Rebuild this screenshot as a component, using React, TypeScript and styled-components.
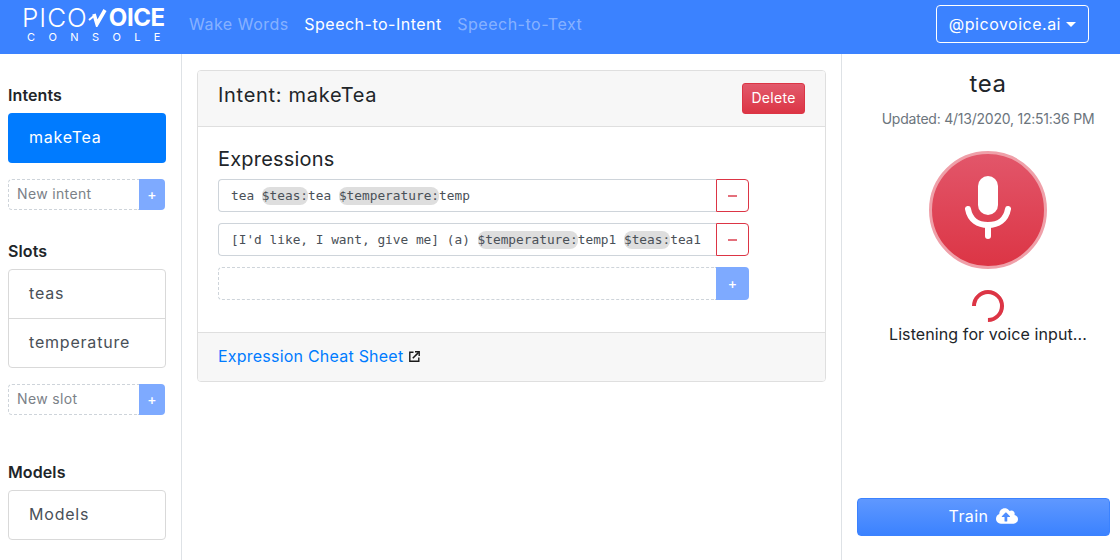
import React from "react";
import styled, { createGlobalStyle } from "styled-components";
import { FaCloudUploadAlt } from "react-icons/fa";

const Global = createGlobalStyle`
  html, body { margin: 0; padding: 0; height: 560px; overflow: hidden; background: #fff; }
  * { box-sizing: border-box; }
  body { font-family: Inter, "Noto Sans", sans-serif; color: #212529; }
`;

const Page = styled.div`display: flex; flex-direction: column; width: 1120px; height: 560px; overflow: hidden;`;
const Navbar = styled.header`display: flex; align-items: center; height: 54px; flex: none; background: #3b82ff; padding: 0 31px 6px 22px;`;
const Logo = styled.div`display: flex; flex-direction: column; width: 144px; color: #fff; margin-right: 23px;`;
const LogoTop = styled.div`display: flex; align-items: center; height: 22px; font-size: 26px; line-height: 22px; margin-top: 2px;`;
const LogoThin = styled.span`font-weight: 300; letter-spacing: 1px;`;
const LogoBold = styled.span`font-size: 24px; font-weight: 700; letter-spacing: -0.4px;`;
const LogoSub = styled.div`font-size: 11px; line-height: 12px; letter-spacing: 13.4px; margin-top: 2px; padding-left: 5px; white-space: nowrap; font-weight: 400;`;
const NavLink = styled.a<{ $active?: boolean }>`
  font-size: 16px; letter-spacing: 0.5px; margin-right: 15.5px; white-space: nowrap;
  color: ${p => (p.$active ? "#fff" : "rgba(255,255,255,.4)")};
`;
const Spacer = styled.div`flex: 1;`;
const Account = styled.button`
  display: flex; align-items: center; height: 38px; padding: 0 12px; font: inherit; font-size: 16px; letter-spacing: 0.5px;
  color: #fff; background: transparent; border: 1px solid #fff; border-radius: 4px;
  &::after { content: ""; margin-left: 5px; border-top: 5px solid #fff; border-left: 5px solid transparent; border-right: 5px solid transparent; }
`;

const Body = styled.div`display: flex; flex: 1; min-height: 0;`;
const Sidebar = styled.aside`width: 182px; flex: none; border-right: 1px solid #dee2e6; padding: 32px 15px 0 8px;`;
const SectionTitle = styled.h6`margin: 0 0 8px; font-size: 16px; line-height: 19px; font-weight: 600; color: #212529; letter-spacing: 0.1px;`;
const ActiveItem = styled.div`
  height: 50px; display: flex; align-items: center; padding: 0 21px 2px; background: #007bff; color: #fff; border-radius: 4px;
  font-size: 16px; letter-spacing: 0.8px;
`;
const ItemList = styled.div`border: 1px solid #d9d9d9; border-radius: 4px; overflow: hidden;`;
const Item = styled.div`
  height: 48px; display: flex; align-items: center; padding: 0 20px 2px; font-size: 16px; letter-spacing: 0.8px; color: #495057;
  & + & { border-top: 1px solid #d9d9d9; height: 49px; }
`;
const NewRow = styled.div<{ $mb: number }>`display: flex; height: 31px; width: 157px; margin-top: 16px; margin-bottom: ${p => p.$mb}px;`;
const NewField = styled.div`
  flex: 1; display: flex; align-items: center; padding: 0 8px 2px; font-size: 14px; letter-spacing: 0.35px; color: #7b8188;
  border: 1px dashed #ced4da; border-right: 0; border-radius: 4px 0 0 4px;
`;
const PlusBtn = styled.div<{ $w: number }>`
  width: ${p => p.$w}px; flex: none; display: flex; align-items: center; justify-content: center;
  background: #7eaaff; color: #fff; border-radius: 0 4px 4px 0; font-size: 14px; font-weight: 500;
`;

const Main = styled.main`flex: 1; min-width: 0; padding: 16px 15px 0; border-right: 1px solid #dee2e6;`;
const Card = styled.section`border: 1px solid #dfdfdf; border-radius: 4px; overflow: hidden;`;
const CardHeader = styled.div`
  height: 56px; display: flex; align-items: flex-start; justify-content: space-between; padding: 12px 20px;
  background: #f7f7f7; border-bottom: 1px solid #dfdfdf;
`;
const CardTitle = styled.h5`margin: 0; font-size: 20px; line-height: 24px; font-weight: 400; letter-spacing: 0.7px;`;
const Danger = styled.button`
  height: 31px; width: 63px; padding: 0 0 2px; font: inherit; font-size: 14px; letter-spacing: 0.3px; color: #fff;
  border: 1px solid #dc3545; border-radius: 3px; background: linear-gradient(180deg, #e25a6c, #dc3545);
`;
const CardBody = styled.div`padding: 20px 20px 32px; display: flex; flex-direction: column; gap: 11px;`;
const ExprTitle = styled.h5`margin: 0 0 -3px; font-size: 20px; line-height: 24px; font-weight: 400; letter-spacing: 0.2px;`;
const ExprRow = styled.div`display: flex; height: 33px; width: 531px;`;
const ExprField = styled.div`
  flex: 1; display: flex; align-items: center; padding: 0 12px; white-space: pre;
  font-family: "DejaVu Sans Mono", monospace; font-size: 12.8px; color: #495057;
  border: 1px solid #ced4da; border-right: 0; border-radius: 4px 0 0 4px;
`;
const Empty = styled.div`flex: 1; border: 1px dashed #ced4da; border-right: 0; border-radius: 4px 0 0 4px;`;
const Slot = styled.span`background: #dedede; border-radius: 8px; line-height: 18px;`;
const MinusBtn = styled.div`
  width: 33px; flex: none; display: flex; align-items: center; justify-content: center;
  border: 1px solid #dc3545; border-radius: 0 4px 4px 0;
  &::before { content: ""; width: 9px; height: 2px; background: #e4707c; }
`;
const CardFooter = styled.div`
  height: 49px; display: flex; align-items: center; padding: 0 20px 2px; background: #f7f7f7; border-top: 1px solid #dfdfdf;
`;
const CheatLink = styled.a`color: #007bff; font-size: 16px; letter-spacing: 0.22px; display: flex; align-items: center; gap: 6px;`;

const Right = styled.aside`width: 278px; flex: none; padding: 15px 0 0 14px; display: flex; flex-direction: column; align-items: center;`;
const WordTitle = styled.h4`margin: 0; font-size: 24px; line-height: 29px; font-weight: 400; letter-spacing: 0.5px;`;
const Updated = styled.div`margin-top: 12px; font-size: 14px; line-height: 17px; letter-spacing: -0.23px; color: #6c757d; white-space: nowrap;`;
const MicButton = styled.div`
  width: 118px; height: 118px; margin-top: 24px; border-radius: 50%; border: 3px solid #efa0a9; padding-bottom: 6px;
  background: linear-gradient(180deg, #e2566a, #dc3545); display: flex; align-items: center; justify-content: center;
`;
const Spinner = styled.div`
  width: 32px; height: 32px; margin-top: 21px; border-radius: 50%; border: 4px solid #dc3545; border-right-color: transparent; transform: rotate(135deg);
`;
const Listening = styled.div`font-size: 16px; line-height: 24px; letter-spacing: 0.1px; white-space: nowrap;`;
const Train = styled.button`
  margin-top: auto; margin-bottom: 24px; align-self: stretch; margin-left: 1px; margin-right: 10px; height: 38px; padding: 0 0 2px; font: inherit; font-size: 16px; letter-spacing: 0.42px;
  color: #fff; border: 1px solid #3b82ff; border-radius: 4px; background: linear-gradient(180deg, #5f98ff, #3b82ff);
  display: flex; align-items: center; justify-content: center; gap: 8px;
`;
const VMarkSvg = styled.svg`flex: none; margin: 0 1px 0 0;`;

const VMark = () => (
  <VMarkSvg width="20" height="18" viewBox="0 0 20 18" fill="none" aria-hidden="true">
    <path d="M1 11 L6.5 6.5" stroke="#fff" strokeWidth="2" />
    <path d="M6 5 L9 15 L17 1" stroke="#fff" strokeWidth="3.6" strokeLinejoin="miter" />
  </VMarkSvg>
);

const ExternalIcon = () => (
  <svg width="11" height="11" viewBox="0 0 11 11" fill="none" stroke="#1a1a1a" aria-hidden="true">
    <path d="M4.5 1.2 H0.8 V10.2 H9.8 V6.5" strokeWidth="1.4" />
    <path d="M3.8 7.2 L9.6 1.4" strokeWidth="1.5" />
    <path d="M6 0.8 H10.2 V5" strokeWidth="1.4" />
  </svg>
);

const MicIcon = () => (
  <svg width="46" height="63" viewBox="0 0 46 63" aria-hidden="true">
    <rect x="13" y="0" width="20" height="39" rx="10" fill="#fff" />
    <path d="M3 33 C5 44 13 49 23 49 C33 49 41 44 43 33" fill="none" stroke="#fff" strokeWidth="6" strokeLinecap="round" />
    <path d="M23 49 V60" stroke="#fff" strokeWidth="6" strokeLinecap="round" />
  </svg>
);

export default function App() {
  return (
    <Page>
      <Global />
      <Navbar>
        <Logo>
          <LogoTop>
            <LogoThin>PICO</LogoThin>
            <VMark />
            <LogoBold>OICE</LogoBold>
          </LogoTop>
          <LogoSub>CONSOLE</LogoSub>
        </Logo>
        <NavLink>Wake Words</NavLink>
        <NavLink $active>Speech-to-Intent</NavLink>
        <NavLink>Speech-to-Text</NavLink>
        <Spacer />
        <Account>@picovoice.ai</Account>
      </Navbar>
      <Body>
        <Sidebar>
          <SectionTitle>Intents</SectionTitle>
          <ActiveItem>makeTea</ActiveItem>
          <NewRow $mb={32}>
            <NewField>New intent</NewField>
            <PlusBtn $w={26}>+</PlusBtn>
          </NewRow>
          <SectionTitle>Slots</SectionTitle>
          <ItemList>
            <Item>teas</Item>
            <Item>temperature</Item>
          </ItemList>
          <NewRow $mb={48}>
            <NewField>New slot</NewField>
            <PlusBtn $w={26}>+</PlusBtn>
          </NewRow>
          <SectionTitle>Models</SectionTitle>
          <ItemList>
            <Item>Models</Item>
          </ItemList>
        </Sidebar>
        <Main>
          <Card>
            <CardHeader>
              <CardTitle>Intent: makeTea</CardTitle>
              <Danger>Delete</Danger>
            </CardHeader>
            <CardBody>
              <ExprTitle>Expressions</ExprTitle>
              <ExprRow>
                <ExprField>tea <Slot>$teas:</Slot>tea <Slot>$temperature:</Slot>temp</ExprField>
                <MinusBtn />
              </ExprRow>
              <ExprRow>
                <ExprField>[I'd like, I want, give me] (a) <Slot>$temperature:</Slot>temp1 <Slot>$teas:</Slot>tea1</ExprField>
                <MinusBtn />
              </ExprRow>
              <ExprRow>
                <Empty />
                <PlusBtn $w={33}>+</PlusBtn>
              </ExprRow>
            </CardBody>
            <CardFooter>
              <CheatLink>Expression Cheat Sheet <ExternalIcon /></CheatLink>
            </CardFooter>
          </Card>
        </Main>
        <Right>
          <WordTitle>tea</WordTitle>
          <Updated>Updated: 4/13/2020, 12:51:36 PM</Updated>
          <MicButton><MicIcon /></MicButton>
          <Spinner />
          <Listening>Listening for voice input...</Listening>
          <Train>Train <FaCloudUploadAlt size={22} /></Train>
        </Right>
      </Body>
    </Page>
  );
}
